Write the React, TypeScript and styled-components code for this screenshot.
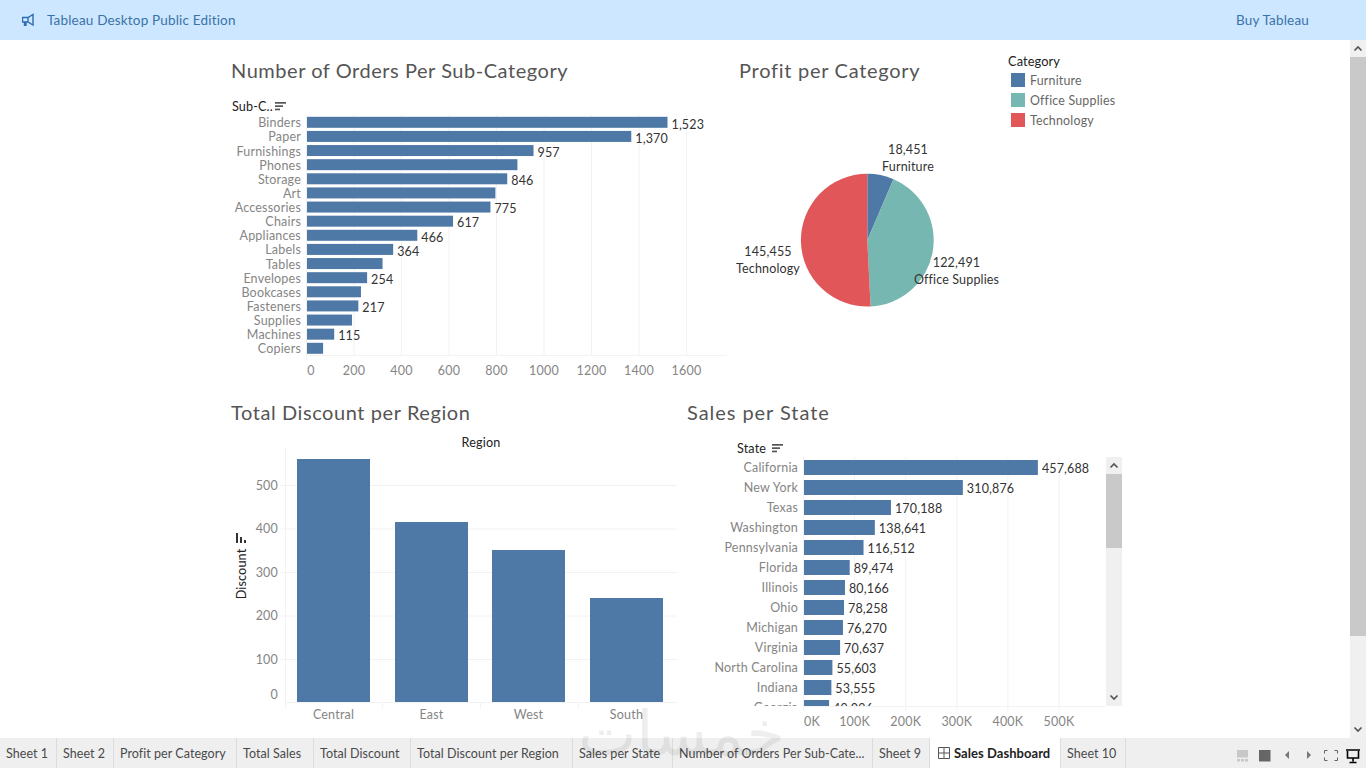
import React from "react";
import styled, { createGlobalStyle } from "styled-components";

const Global = createGlobalStyle`
  html, body { margin: 0; padding: 0; height: 100%; overflow: hidden; background: #fff; }
  * { box-sizing: border-box; }
`;
const FONT = `Lato, "Open Sans", "Liberation Sans", sans-serif`;
const BLUE = "#4e79a7", TEAL = "#76b7b2", RED = "#e15759";

const Page = styled.div`
  position: relative; width: 1366px; height: 768px; display: flex; flex-direction: column;
  font-family: ${FONT}; background: #fff; overflow: hidden;
`;
const Banner = styled.header`
  height: 40px; flex: none; background: #cce7ff; color: #3b72a8; display: flex; align-items: center;
  padding: 0 57px 0 22px; font-size: 13.5px; letter-spacing: 0.18px;
`;
const BannerIcon = styled.svg` width: 14px; height: 14px; margin-right: 11px; flex: none; `;
const BannerText = styled.span` flex: 1; `;
const Body = styled.div` flex: 1; min-height: 0; display: flex; `;
const Canvas = styled.main` flex: 1; padding-left: 225px; display: flex; flex-direction: column; `;
const Row = styled.section<{ $h: number }>` height: ${p => p.$h}px; display: flex; flex: none; `;
const Panel = styled.div<{ $w: number }>` width: ${p => p.$w}px; flex: none; position: relative; display: flex; flex-direction: column; `;
const Title = styled.h2<{ $ls: number }>`
  margin: 17px 0 0; height: 27px; line-height: 26px; padding-left: 6px; font-size: 20px; font-weight: 400;
  color: #555; letter-spacing: ${p => p.$ls}px; white-space: nowrap; flex: none;
`;
const Chart = styled.svg` display: block; flex: none; overflow: hidden; `;
const Tick = styled.text`
  font-size: 12.5px; fill: #858585; font-family: ${FONT}; letter-spacing: 0.2px; dominant-baseline: central;
`;
const Val = styled.text`
  font-size: 12.5px; fill: #333; font-family: ${FONT}; letter-spacing: 0.15px; dominant-baseline: central;
`;
const Head = styled.text`
  font-size: 12.6px; fill: #222; font-family: ${FONT}; font-weight: 400; letter-spacing: 0.15px; dominant-baseline: central;
`;
const Legend = styled.aside` width: 122px; flex: none; padding: 14px 0 0 5px; `;
const LegendTitle = styled.div` font-size: 12.8px; line-height: 14px; color: #222; margin-bottom: 2px; letter-spacing: .1px; `;
const LegendRow = styled.div` display: flex; align-items: center; height: 20px; padding-left: 3px; font-size: 12.4px; color: #666; letter-spacing: .2px; `;
const Swatch = styled.span<{ $c: string }>` width: 14px; height: 14px; background: ${p => p.$c}; margin-right: 5px; flex: none; `;
const ChartScroll = styled.div`
  position: absolute; left: 425px; top: 75px; width: 16px; height: 249px; background: #f0f0f0;
  display: flex; flex-direction: column;
`;
const Arrow = styled.div<{ $h: number }>` height: ${p => p.$h}px; flex: none; display: flex; align-items: center; justify-content: center; `;
const Thumb = styled.div<{ $h: number }>` height: ${p => p.$h}px; flex: none; background: #c9c9c9; `;
const Fill = styled.div` flex: 1; `;
const Scrollbar = styled.div` width: 16px; flex: none; background: #f0f0f0; display: flex; flex-direction: column; `;
const TabBar = styled.footer` height: 30px; flex: none; background: #efefef; display: flex; align-items: stretch; position: relative; `;
const Tab = styled.div<{ $w: number; $active?: boolean }>`
  width: ${p => p.$w}px; flex: none; display: flex; align-items: center; padding-left: 6px; white-space: nowrap; overflow: hidden;
  font-size: ${p => (p.$active ? 13 : 12.5)}px; letter-spacing: 0.05px; border-right: 1px solid #dcdcdc;
  color: ${p => (p.$active ? "#222" : "#4a4a4a")};
  font-weight: ${p => (p.$active ? 700 : 400)};
  background: ${p => (p.$active ? "#fff" : "transparent")};
`;
const TabIcon = styled.svg` width: 12px; height: 12px; margin: 0 4px 0 2px; flex: none; `;
const TabTools = styled.div` position: absolute; left: 1237px; top: 0; height: 30px; display: flex; align-items: center; `;
const Watermark = styled.div`
  position: absolute; left: 578px; top: 694px; width: 186px; text-align: center; font-family: "DejaVu Sans", sans-serif;
  font-size: 62px; line-height: 80px; color: rgba(0, 0, 0, 0.065); pointer-events: none; white-space: nowrap;
`;

const Chev = ({ up, c = "#555" }: { up?: boolean; c?: string }) => (
  <svg width="10" height="7" viewBox="0 0 10 7">
    <polyline points={up ? "1.5,5.5 5,2 8.5,5.5" : "1.5,1.5 5,5 8.5,1.5"} fill="none" stroke={c} strokeWidth="1.7" />
  </svg>
);
const SortIcon = ({ x, y }: { x: number; y: number }) => (
  <g fill="#555">
    <rect x={x} y={y} width={11} height={1.7} />
    <rect x={x} y={y + 3.3} width={8} height={1.7} />
    <rect x={x} y={y + 6.6} width={5} height={1.7} />
  </g>
);

const GRID = "#f2f2f2";
const orders: [string, number, boolean][] = [
  ["Binders", 1523, true], ["Paper", 1370, true], ["Furnishings", 957, true], ["Phones", 889, false],
  ["Storage", 846, true], ["Art", 796, false], ["Accessories", 775, true], ["Chairs", 617, true],
  ["Appliances", 466, true], ["Labels", 364, true], ["Tables", 319, false], ["Envelopes", 254, true],
  ["Bookcases", 228, false], ["Fasteners", 217, true], ["Supplies", 190, false], ["Machines", 115, true], ["Copiers", 68, false],
];
const OrdersChart = () => (
  <Chart width={508} height={298} viewBox="225 84 508 298">
    <Head x={232} y={106.5}>Sub-C..</Head>
    <SortIcon x={275} y={102} />
    {[0, 200, 400, 600, 800, 1000, 1200, 1400, 1600].map(v => {
      const x = 306.5 + v * 0.2375;
      return (
        <g key={v}>
          <line x1={x} x2={x} y1={115} y2={v === 0 ? 360 : 355} stroke={GRID} />
          <Tick x={v === 0 ? 311 : x} y={370} textAnchor="middle">{v}</Tick>
        </g>
      );
    })}
    <line x1={306} x2={727} y1={355.5} y2={355.5} stroke={GRID} />
    {orders.map(([n, v, l], i) => {
      const y = 116.8 + i * 14.125;
      const w = v * 0.2367;
      return (
        <g key={n}>
          <Tick x={301} y={y + 6} textAnchor="end">{n}</Tick>
          <rect x={307} y={y} width={w} height={11} fill={BLUE} />
          {l && <Val x={307 + w + 4} y={y + 7.2}>{v.toLocaleString("en-US")}</Val>}
        </g>
      );
    })}
  </Chart>
);

const pieSlices: [number, string][] = [[18451, BLUE], [122491, TEAL], [145455, RED]];
const PieChart = () => {
  const cx = 867.3, cy = 240.2, r = 66.4;
  const total = pieSlices.reduce((s, [v]) => s + v, 0);
  let a = 0;
  const pt = (t: number) => `${cx + r * Math.sin(t)} ${cy - r * Math.cos(t)}`;
  return (
    <Chart width={270} height={298} viewBox="733 84 270 298">
      {pieSlices.map(([v, c]) => {
        const s = a, e = a + (v / total) * Math.PI * 2;
        a = e;
        return <path key={c} fill={c} d={`M${cx} ${cy}L${pt(s)}A${r} ${r} 0 ${e - s > Math.PI ? 1 : 0} 1 ${pt(e)}Z`} />;
      })}
      <Val x={908} y={149} textAnchor="middle">18,451</Val>
      <Val x={908} y={166} textAnchor="middle">Furniture</Val>
      <Val x={768} y={251} textAnchor="middle">145,455</Val>
      <Val x={768} y={268} textAnchor="middle">Technology</Val>
      <Val x={956.5} y={262} textAnchor="middle">122,491</Val>
      <Val x={956.5} y={279} textAnchor="middle">Office Supplies</Val>
    </Chart>
  );
};

const regions: [string, number, number][] = [["Central", 297, 459], ["East", 395, 522], ["West", 492, 550], ["South", 590, 598]];
const DiscountChart = () => (
  <Chart width={456} height={312} viewBox="225 426 456 312">
    <Head x={481} y={442.5} textAnchor="middle">Region</Head>
    <line x1={285.5} x2={285.5} y1={447} y2={708} stroke={GRID} />
    {[[500, 485], [400, 528.5], [300, 572], [200, 615.5], [100, 659]].map(([v, y]) => (
      <g key={v}>
        <line x1={280} x2={677} y1={y + 0.5} y2={y + 0.5} stroke={GRID} />
        <Tick x={278} y={y} textAnchor="end">{v}</Tick>
      </g>
    ))}
    <Tick x={278} y={694} textAnchor="end">0</Tick>
    <line x1={285} x2={677} y1={702.5} y2={702.5} stroke={GRID} />
    {[382.5, 480.5, 578.5].map(x => <line key={x} x1={x} x2={x} y1={702} y2={708} stroke={GRID} />)}
    {regions.map(([n, x, top]) => (
      <g key={n}>
        <rect x={x} y={top} width={73} height={702 - top} fill={BLUE} />
        <Tick x={x + 36.5} y={714} textAnchor="middle">{n}</Tick>
      </g>
    ))}
    <Head x={241.5} y={574} textAnchor="middle" transform="rotate(-90 241.5 574)">Discount</Head>
    <g fill="#333">
      <rect x={236} y={533} width={2} height={10} />
      <rect x={240} y={537} width={2} height={6} />
      <rect x={244} y={540} width={2} height={3} />
    </g>
  </Chart>
);

const states: [string, number][] = [
  ["California", 457688], ["New York", 310876], ["Texas", 170188], ["Washington", 138641], ["Pennsylvania", 116512],
  ["Florida", 89474], ["Illinois", 80166], ["Ohio", 78258], ["Michigan", 76270], ["Virginia", 70637],
  ["North Carolina", 55603], ["Indiana", 53555], ["Georgia", 49096],
];
const StateChart = () => (
  <Chart width={444} height={312} viewBox="681 426 444 312">
    <defs>
      <clipPath id="stateClip"><rect x={681} y={457} width={425} height={249} /></clipPath>
    </defs>
    <Head x={737} y={448.5}>State</Head>
    <SortIcon x={772} y={444} />
    {[0, 100, 200, 300, 400, 500].map(k => {
      const x = 803.5 + k * 0.511;
      return (
        <g key={k}>
          <line x1={x} x2={x} y1={457} y2={711} stroke={GRID} />
          <Tick x={k === 0 ? 812 : x} y={721} textAnchor="middle">{k}K</Tick>
        </g>
      );
    })}
    <line x1={803} x2={1106} y1={706.5} y2={706.5} stroke={GRID} />
    <g clipPath="url(#stateClip)">
      {states.map(([n, v], i) => {
        const y = 460 + i * 20;
        const w = v * 0.000511;
        return (
          <g key={n}>
            <Tick x={798} y={y + 7.5} textAnchor="end">{n}</Tick>
            <rect x={804} y={y} width={w} height={15} fill={BLUE} />
            <Val x={804 + w + 4} y={y + 8}>{v.toLocaleString("en-US")}</Val>
          </g>
        );
      })}
    </g>
  </Chart>
);

const tabs: [string, number][] = [
  ["Sheet 1", 57], ["Sheet 2", 57], ["Profit per Category", 123], ["Total Sales", 77], ["Total Discount", 97],
  ["Total Discount per Region", 162], ["Sales per State", 100], ["Number of Orders Per Sub-Cate...", 200], ["Sheet 9", 57],
];

const ToolIcons = () => (
  <svg width="125" height="30" viewBox="1237 738 125 30">
    <g fill="#c8c8c8">
      <rect x={1237} y={750} width={11} height={7.5} />
      <rect x={1237} y={759} width={3} height={2.5} />
      <rect x={1241} y={759} width={3} height={2.5} />
      <rect x={1245} y={759} width={3} height={2.5} />
    </g>
    <rect x={1259} y={750} width={11.5} height={11.5} fill="#666" />
    <path d="M1285 755l4-4v8z" fill="#777" />
    <path d="M1311 755l-4-4v8z" fill="#777" />
    <path d="M1324.5 753.5v-3h3M1334.5 750.5h3v3M1337.5 757.5v3h-3M1327.5 760.5h-3v-3" fill="none" stroke="#666" />
    <path d="M1346 750h14M1347.5 751v7h11v-7M1353 758v3.5M1349.5 762.5h7" fill="none" stroke="#000" strokeWidth="1.6" />
  </svg>
);

export default function App() {
  return (
    <Page>
      <Global />
      <Banner>
        <BannerIcon viewBox="22 13 14 14">
          <path d="M22.5 17.5h5.5l5-3v10.5l-5-3h-5.5zM24.5 22v4M26 22v4M28 17.5v4.5" fill="none" stroke="#2d6cb0" strokeWidth="1.4" />
        </BannerIcon>
        <BannerText>Tableau Desktop Public Edition</BannerText>
        <span>Buy Tableau</span>
      </Banner>
      <Body>
        <Canvas>
          <Row $h={342}>
            <Panel $w={508}>
              <Title $ls={0.54}>Number of Orders Per Sub-Category</Title>
              <OrdersChart />
            </Panel>
            <Panel $w={270}>
              <Title $ls={0.72}>Profit per Category</Title>
              <PieChart />
            </Panel>
            <Legend>
              <LegendTitle>Category</LegendTitle>
              <LegendRow><Swatch $c={BLUE} />Furniture</LegendRow>
              <LegendRow><Swatch $c={TEAL} />Office Supplies</LegendRow>
              <LegendRow><Swatch $c={RED} />Technology</LegendRow>
            </Legend>
          </Row>
          <Row $h={356}>
            <Panel $w={456}>
              <Title $ls={0.58}>Total Discount per Region</Title>
              <DiscountChart />
            </Panel>
            <Panel $w={444}>
              <Title $ls={0.95}>Sales per State</Title>
              <StateChart />
              <ChartScroll>
                <Arrow $h={17}><Chev up /></Arrow>
                <Thumb $h={74} />
                <Fill />
                <Arrow $h={17}><Chev /></Arrow>
              </ChartScroll>
            </Panel>
          </Row>
        </Canvas>
        <Scrollbar>
          <Arrow $h={17}><Chev up /></Arrow>
          <Thumb $h={579} />
          <Fill />
          <Arrow $h={17}><Chev /></Arrow>
        </Scrollbar>
      </Body>
      <TabBar>
        {tabs.map(([t, w]) => <Tab key={t} $w={w}>{t}</Tab>)}
        <Tab $w={131} $active>
          <TabIcon viewBox="0 0 12 12">
            <path d="M.5.5h11v11H.5zM6 .5v11M.5 6h11" fill="none" stroke="#555" />
          </TabIcon>
          Sales Dashboard
        </Tab>
        <Tab $w={65}>Sheet 10</Tab>
        <TabTools><ToolIcons /></TabTools>
      </TabBar>
      <Watermark>خمسات</Watermark>
    </Page>
  );
}
